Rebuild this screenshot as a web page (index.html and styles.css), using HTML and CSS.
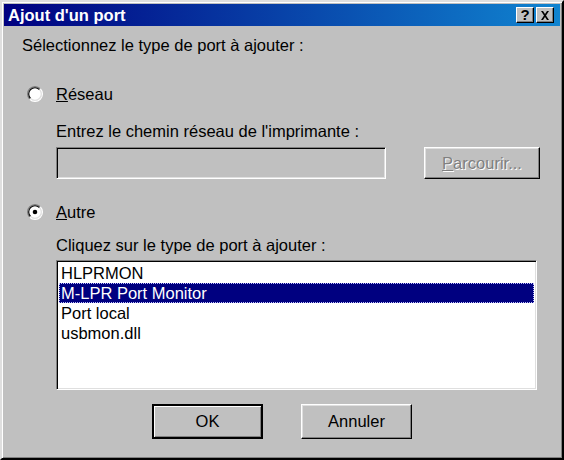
FILE: index.html
```html
<!DOCTYPE html>
<html lang="fr">
<head>
<meta charset="utf-8">
<title>Ajout d'un port</title>
<link rel="stylesheet" href="styles.css">
</head>
<body>
<div class="window">
  <div class="titlebar">
    <span class="title">Ajout d'un port</span>
    <div class="tbtns">
      <span class="tbtn help">?</span>
      <span class="tbtn close">
        <svg width="10" height="9" viewBox="0 0 10 9"><path d="M1 0h2l2 3 2-3h2L6 4.5 9 9H7L5 6 3 9H1l3-4.5z" fill="#000"/></svg>
      </span>
    </div>
  </div>
  <div class="content">
    <p class="text first">Sélectionnez le type de port à ajouter :</p>
    <div class="radio-row r1">
      <svg class="radio" width="16" height="16" viewBox="0 0 14 14">
        <circle cx="7" cy="7" r="6" fill="#fff"/>
        <path d="M2.4 11.6A6.5 6.5 0 0 1 11.6 2.4" fill="none" stroke="#808080"/>
        <path d="M11.6 2.4A6.5 6.5 0 0 1 2.4 11.6" fill="none" stroke="#fff"/>
        <path d="M3.1 10.9A5.5 5.5 0 0 1 10.9 3.1" fill="none" stroke="#000"/>
        <path d="M10.9 3.1A5.5 5.5 0 0 1 3.1 10.9" fill="none" stroke="#dfdfdf"/>
      </svg>
      <span class="text"><u>R</u>éseau</span>
    </div>
    <div class="indent">
      <p class="text t2">Entrez le chemin réseau de l'imprimante :</p>
      <div class="field-row">
        <div class="field"></div>
        <div class="btn disabled"><span><u>P</u>arcourir...</span></div>
      </div>
    </div>
    <div class="radio-row r2">
      <svg class="radio" width="16" height="16" viewBox="0 0 14 14">
        <circle cx="7" cy="7" r="6" fill="#fff"/>
        <path d="M2.4 11.6A6.5 6.5 0 0 1 11.6 2.4" fill="none" stroke="#808080"/>
        <path d="M11.6 2.4A6.5 6.5 0 0 1 2.4 11.6" fill="none" stroke="#fff"/>
        <path d="M3.1 10.9A5.5 5.5 0 0 1 10.9 3.1" fill="none" stroke="#000"/>
        <path d="M10.9 3.1A5.5 5.5 0 0 1 3.1 10.9" fill="none" stroke="#dfdfdf"/>
        <circle cx="7" cy="7" r="2" fill="#000"/>
      </svg>
      <span class="text"><u>A</u>utre</span>
    </div>
    <div class="indent">
      <p class="text t3">Cliquez sur le type de port à ajouter :</p>
      <div class="listbox">
        <div class="item">HLPRMON</div>
        <div class="item selected">M-LPR Port Monitor</div>
        <div class="item">Port local</div>
        <div class="item">usbmon.dll</div>
      </div>
    </div>
    <div class="actions">
      <div class="btn default"><span>OK</span></div>
      <div class="btn"><span>Annuler</span></div>
    </div>
  </div>
</div>
</body>
</html>
```
FILE: styles.css
```css
html, body {
  margin: 0;
  padding: 0;
  background: #c0c0c0;
}

.window {
  width: 564px;
  height: 460px;
  box-sizing: border-box;
  background: #c0c0c0;
  border: 2px solid;
  border-color: #dfdfdf #000 #000 #dfdfdf;
  box-shadow: inset 1px 1px #fff, inset -1px -1px #808080;
  padding: 2px;
  font-family: "Liberation Sans", Arial, sans-serif;
  font-size: 16.5px;
  color: #000;
}

.titlebar {
  height: 22px;
  background: linear-gradient(to right, #000080, #1084d0);
  display: flex;
  align-items: center;
  justify-content: space-between;
  padding: 0 6px 0 4px;
}

.title {
  color: #fff;
  font-weight: bold;
  font-size: 16.5px;
  line-height: 22px;
}

.tbtns {
  display: flex;
  gap: 2px;
}

.tbtn {
  width: 18px;
  height: 16px;
  box-sizing: border-box;
  background: #c0c0c0;
  border: 1px solid;
  border-color: #fff #000 #000 #fff;
  box-shadow: inset -1px -1px #808080;
  display: flex;
  align-items: center;
  justify-content: center;
  font-weight: bold;
  font-size: 15px;
  line-height: 14px;
}

.content {
  padding: 0 20px 0 18px;
}

.text {
  margin: 0;
  line-height: 18px;
}

.first {
  margin-top: 10px;
}

.radio-row {
  display: flex;
  align-items: center;
  height: 18px;
}

.r1 {
  margin-top: 31px;
}

.r2 {
  margin-top: 24px;
}

.radio {
  margin-left: 5px;
  margin-right: 13px;
  flex: none;
}

.indent {
  margin-left: 34px;
}

.t2 {
  margin-top: 19px;
}

.t3 {
  margin-top: 15px;
}

.field-row {
  display: flex;
  justify-content: space-between;
  margin-top: 7px;
  height: 32px;
}

.field {
  width: 330px;
  box-sizing: border-box;
  border: 1px solid;
  border-color: #808080 #fff #fff #808080;
  box-shadow: inset 1px 1px #000, inset -1px -1px #dfdfdf;
  background: #c0c0c0;
}

.btn {
  box-sizing: border-box;
  border: 1px solid;
  border-color: #fff #000 #000 #fff;
  box-shadow: inset -1px -1px #808080, inset 1px 1px #dfdfdf;
  background: #c0c0c0;
  display: flex;
  align-items: center;
  justify-content: center;
  font-size: 16.5px;
}

.field-row .btn {
  width: 116px;
}

.btn.disabled {
  color: #808080;
  text-shadow: 1px 1px 0 #fff;
}

.listbox {
  margin-top: 6px;
  margin-right: 3px;
  height: 130px;
  box-sizing: border-box;
  border: 1px solid;
  border-color: #808080 #fff #fff #808080;
  box-shadow: inset 1px 1px #000, inset -1px -1px #dfdfdf;
  background: #fff;
  padding: 2px;
}

.item {
  height: 20px;
  line-height: 20px;
  padding-left: 2px;
}

.item.selected {
  background: #000080;
  color: #fff;
  outline: 1px dotted #c0c0ff;
  outline-offset: -1px;
}

.actions {
  display: flex;
  justify-content: center;
  gap: 38px;
  margin: 14px -20px 0 -18px;
}

.actions .btn {
  height: 35px;
  width: 111px;
}

.btn.default {
  border: 2px solid #000;
  border-color: #000;
  box-shadow: inset 1px 1px #fff, inset -1px -1px #808080;
}
```
